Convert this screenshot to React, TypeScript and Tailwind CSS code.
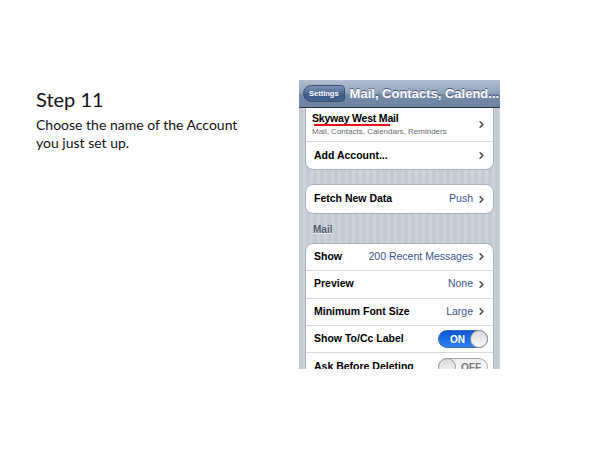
import { ChevronRight } from "lucide-react";

const Chevron = () => (
  <ChevronRight size={11} strokeWidth={3.5} className="text-[#4b4b4b] ml-[3px] shrink-0" />
);

const Row = ({
  label,
  value,
  last = false,
}: {
  label: string;
  value?: string;
  last?: boolean;
}) => (
  <div
    className={`flex items-center h-[27.4px] pl-[8px] pr-[6px] ${
      last ? "" : "border-b border-[#d9d9d9]"
    }`}
  >
    <span className="font-bold text-[10.5px] text-black flex-1">{label}</span>
    {value && <span className="text-[10.5px] text-[#385487]">{value}</span>}
    <Chevron />
  </div>
);

const Toggle = ({ on }: { on: boolean }) =>
  on ? (
    <div className="relative w-[50px] h-[18px] rounded-full bg-[linear-gradient(#0a58d6,#2f80ee)] border border-[#3a6ab0] flex items-center">
      <span className="text-white font-bold text-[10px] pl-[11px]">ON</span>
      <div className="absolute right-[-1px] top-[-1px] w-[18px] h-[18px] rounded-full bg-[linear-gradient(#d8d8d8,#fafafa)] border border-[#9a9a9a]" />
    </div>
  ) : (
    <div className="relative w-[50px] h-[18px] rounded-full bg-[linear-gradient(#eeeeee,#ffffff)] border border-[#a8a8a8] flex items-center justify-end">
      <span className="text-[#7a7a7a] font-bold text-[10px] pr-[6px]">OFF</span>
      <div className="absolute left-[-1px] top-[-1px] w-[18px] h-[18px] rounded-full bg-[linear-gradient(#d8d8d8,#fafafa)] border border-[#9a9a9a]" />
    </div>
  );

const ToggleRow = ({ label, on, last = false }: { label: string; on: boolean; last?: boolean }) => (
  <div
    className={`flex items-center h-[27.4px] pl-[8px] pr-[5px] ${
      last ? "" : "border-b border-[#d9d9d9]"
    }`}
  >
    <span className="font-bold text-[10.5px] text-black flex-1">{label}</span>
    <Toggle on={on} />
  </div>
);

export default function App() {
  return (
    <div className="w-[600px] h-[450px] bg-white flex font-['Liberation_Sans',Arial,sans-serif]">
      {/* slide text */}
      <div className="w-[299px] shrink-0 pl-[36px] pt-[86px] font-['Lato','Open_Sans',sans-serif] text-[#111]">
        <div className="text-[20px] leading-[26px]">Step 11</div>
        <div className="text-[14px] leading-[18px] mt-[4px]">
          Choose the name of the Account
          <br />
          you just set up.
        </div>
      </div>

      {/* phone screenshot */}
      <div className="mt-[80px] w-[201px] h-[289px] overflow-hidden flex flex-col bg-[repeating-linear-gradient(90deg,#c3cad3_0px,#c3cad3_4px,#ccd3db_4px,#ccd3db_7px)]">
        <div className="h-[28px] shrink-0 flex items-center px-[4px] bg-[linear-gradient(#b3bfd0,#8ea1bb_50%,#7389a8_51%,#6d84a2)] border-b border-[#2d3642]">
          <div className="h-[17px] px-[5px] flex items-center rounded-[4px] rounded-l-[9px] bg-[linear-gradient(#7b93b6,#4a6794_50%,#3d5c8a_51%,#44628e)] border border-[#3b4d66] text-white text-[7.5px] font-bold">
            Settings
          </div>
          <div className="ml-[5px] text-white font-bold text-[13px] whitespace-nowrap [text-shadow:0_-1px_0_#4a5b75]">
            Mail, Contacts, Calend...
          </div>
        </div>

        <div className="px-[6px]">
          <div className="bg-white rounded-b-[8px] border border-t-0 border-[#a9b0b8]">
            <div className="flex items-center h-[34px] pl-[6px] pr-[6px] border-b border-[#d9d9d9]">
              <div className="flex-1">
                <div className="relative w-[114px] bg-white">
                  <div className="font-bold text-[10.5px] leading-[12px] text-black tracking-[-0.2px]">
                    Skyway West Mail
                  </div>
                  <div className="h-[2px] w-[76px] bg-[#e0161c] ml-[2px]" />
                </div>
                <div className="text-[8px] leading-[10px] text-[#6a6a6a] mt-[1px]">
                  Mail, Contacts, Calendars, Reminders
                </div>
              </div>
              <Chevron />
            </div>
            <Row label="Add Account..." last />
          </div>

          <div className="mt-[14px] bg-white rounded-[8px] border border-[#a9b0b8]">
            <Row label="Fetch New Data" value="Push" last />
          </div>

          <div className="h-[29px] flex items-center pl-[8px] pt-[3px] text-[10px] font-bold text-[#4c566c] [text-shadow:0_1px_0_#ffffff]">
            Mail
          </div>

          <div className="bg-white rounded-[8px] border border-[#a9b0b8]">
            <Row label="Show" value="200 Recent Messages" />
            <Row label="Preview" value="None" />
            <Row label="Minimum Font Size" value="Large" />
            <ToggleRow label="Show To/Cc Label" on />
            <ToggleRow label="Ask Before Deleting" on={false} last />
          </div>
        </div>
      </div>
    </div>
  );
}
